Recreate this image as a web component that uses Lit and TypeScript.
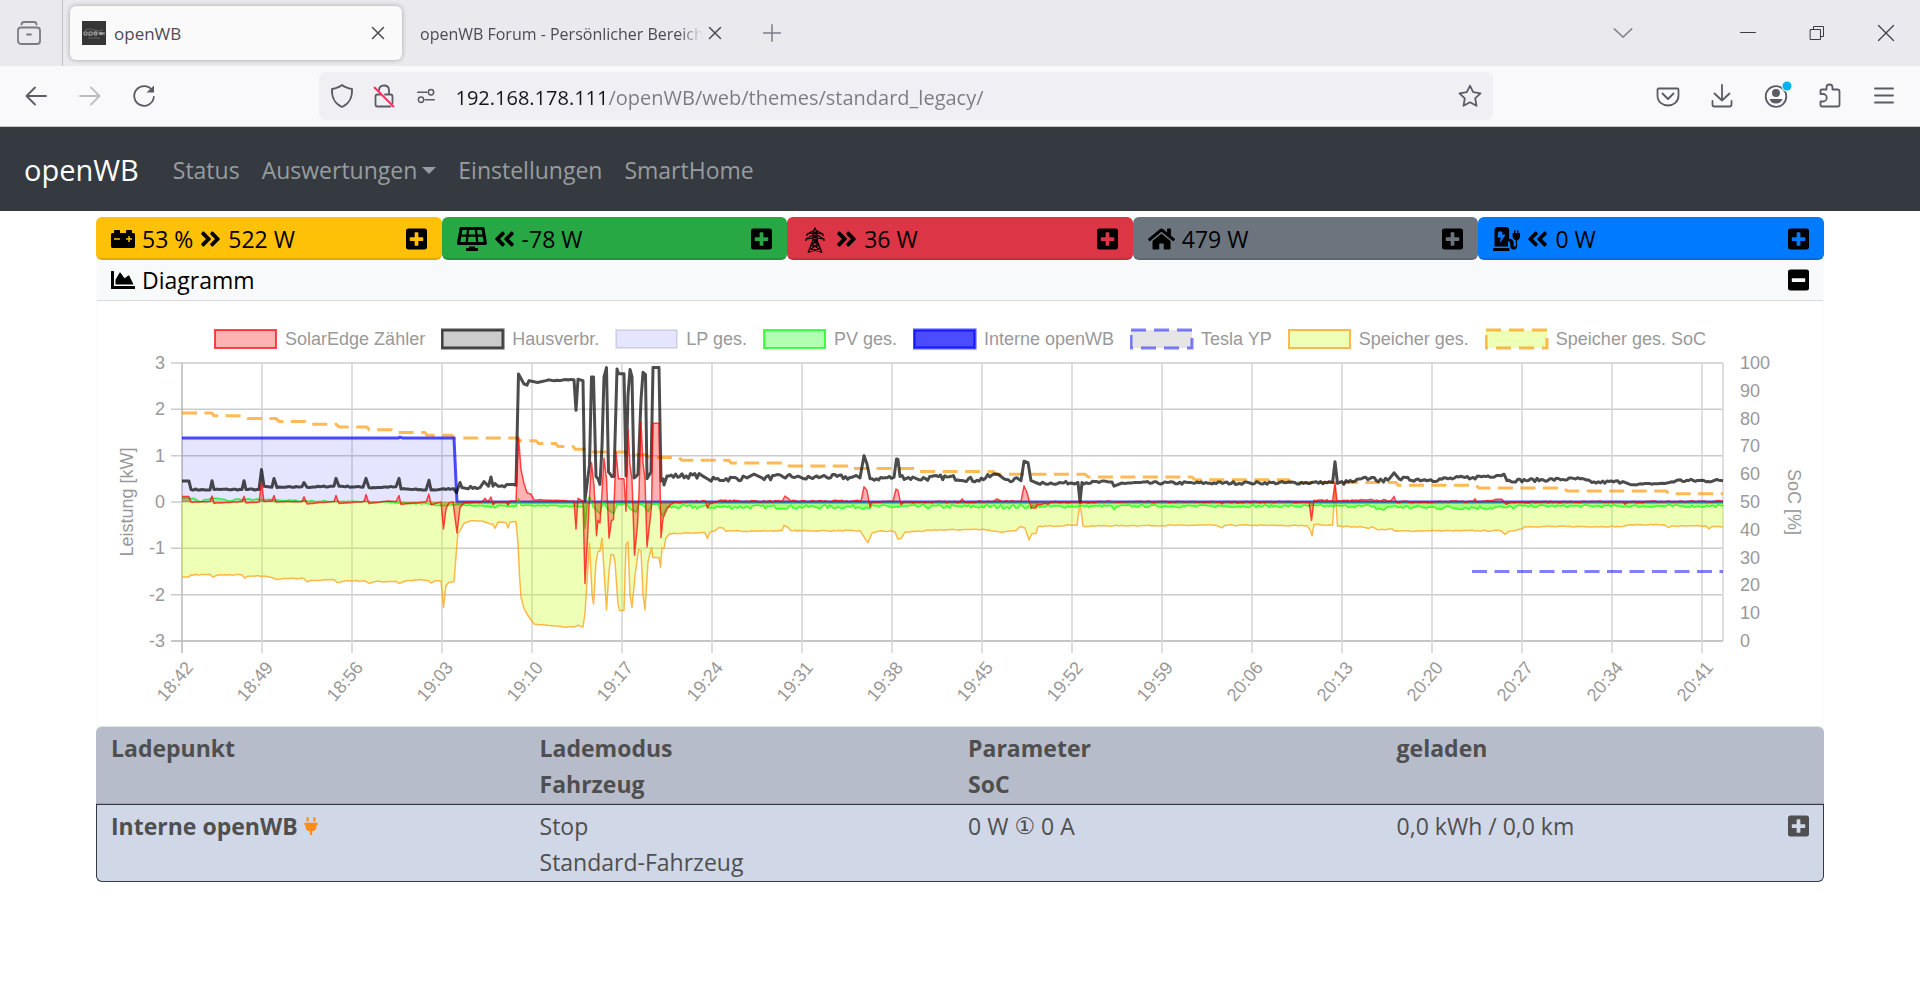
import { LitElement, html, svg, css, nothing } from "lit";
import { customElement, property, state } from "lit/decorators.js";

/* ---------- icon library ---------- */

const solid: Record<string, { w: number; d: string }> = {
  battery: { w: 512, d: "M480 128h-32V80c0-8.840-7.160-16-16-16h-96c-8.840 0-16 7.160-16 16v48H192V80c0-8.840-7.160-16-16-16H80c-8.840 0-16 7.160-16 16v48H32c-17.670 0-32 14.330-32 32v256c0 17.670 14.330 32 32 32h448c17.670 0 32-14.330 32-32V160c0-17.670-14.330-32-32-32zM192 264c0 4.420-3.580 8-8 8H72c-4.420 0-8-3.580-8-8v-16c0-4.420 3.580-8 8-8h112c4.420 0 8 3.580 8 8v16zm256 0c0 4.420-3.580 8-8 8h-40v40c0 4.420-3.580 8-8 8h-16c-4.420 0-8-3.580-8-8v-40h-40c-4.420 0-8-3.580-8-8v-16c0-4.420 3.580-8 8-8h40v-40c0-4.420 3.580-8 8-8h16c4.420 0 8 3.580 8 8v40h40c4.420 0 8 3.580 8 8v16z" },
  solar: { w: 640, d: "M431.980 448.010l-47.970.050V416h-128v32.210l-47.980.050c-8.820.010-15.970 7.160-15.980 15.990l-.050 31.730c-.010 8.850 7.170 16.030 16.020 16.020l223.960-.260c8.820-.010 15.970-7.160 15.980-15.980l.040-31.730c.010-8.850-7.170-16.030-16.020-16.020zM585.200 26.740C582.580 11.310 568.990 0 553.060 0H86.930C71 0 57.410 11.310 54.790 26.740-3.320 369.160.04 348.080.03 352c-.030 17.320 14.290 32 32.600 32h574.740c18.230 0 32.510-14.560 32.590-31.790.020-4.080 3.350 16.950-54.760-325.470zM259.830 64h120.330l9.770 96H250.060l9.770-96zm-75.170 256H71.090L90.100 208h105.970l-11.410 112zm16.290-160H98.240l16.290-96h96.190l-9.770 96zm32.820 160l11.400-112h149.650l11.400 112H233.770zm195.500-256h96.190l16.290 96H439.040l-9.770-96zm26.060 256l-11.400-112H549.900l19.010 112H455.340z" },
  home: { w: 576, d: "M280.370 148.260L96 300.110V464a16 16 0 0 0 16 16l112.060-.290a16 16 0 0 0 15.920-16V368a16 16 0 0 1 16-16h64a16 16 0 0 1 16 16v95.640a16 16 0 0 0 16 16.050L464 480a16 16 0 0 0 16-16V300L295.670 148.260a12.190 12.190 0 0 0-15.300 0zM571.600 251.470L488 182.560V44.050a12 12 0 0 0-12-12h-56a12 12 0 0 0-12 12v72.610L318.470 43a48 48 0 0 0-61 0L4.340 251.470a12 12 0 0 0-1.600 16.900l25.500 31A12 12 0 0 0 45.150 301l235.220-193.740a12.190 12.190 0 0 1 15.300 0L530.900 301a12 12 0 0 0 16.900-1.600l25.500-31a12 12 0 0 0-1.700-16.930z" },
  charger: { w: 576, d: "M336 448H16c-8.840 0-16 7.160-16 16v32c0 8.840 7.160 16 16 16h320c8.840 0 16-7.160 16-16v-32c0-8.840-7.160-16-16-16zm208-320V80c0-8.840-7.160-16-16-16s-16 7.160-16 16v48h-32V80c0-8.840-7.160-16-16-16s-16 7.160-16 16v48h-16c-8.840 0-16 7.160-16 16v35.760c0 51.190 28.240 93.200 72 107.700V392c0 13.230-10.770 24-24 24s-24-10.770-24-24V336c0-48.600-39.400-88-88-88h-8V64c0-35.350-28.650-64-64-64H96C60.650 0 32 28.650 32 64v352h288V304h8c22.090 0 40 17.910 40 40v61.450c0 37.700 28.270 72.140 65.790 75.800 43.160 4.220 79.660-29.770 79.660-72.050V285.190c41.800-15.500 70.550-56.400 70.550-105.430V144c0-8.840-7.160-16-16-16h-16zm-283.910 47.760l-93.700 139c-2.200 3.330-6.210 5.240-10.390 5.240-7.670 0-13.470-6.280-11.670-12.920L167.350 224H108c-7.250 0-12.850-5.590-11.890-11.890l16-107C112.900 99.900 117.980 96 124 96h68c7.880 0 13.620 6.540 11.600 13.260L192 160h60c9.190 0 15.090 8.740 8.090 15.760z" },
  right: { w: 448, d: "M224.300 273l-136 136c-9.400 9.400-24.600 9.400-33.900 0l-22.600-22.600c-9.400-9.400-9.400-24.600 0-33.900l96.400-96.400-96.400-96.400c-9.400-9.400-9.400-24.600 0-33.900L54.300 103c9.400-9.400 24.600-9.400 33.900 0l136 136c9.500 9.400 9.500 24.600.1 34zm192-34l-136-136c-9.400-9.400-24.600-9.400-33.900 0l-22.600 22.600c-9.400 9.400-9.400 24.600 0 33.900l96.400 96.400-96.400 96.400c-9.400 9.400-9.400 24.600 0 33.900l22.600 22.600c9.400 9.400 24.600 9.400 33.900 0l136-136c9.400-9.200 9.400-24.400 0-33.800z" },
  left: { w: 448, d: "M223.700 239l136-136c9.400-9.400 24.600-9.400 33.900 0l22.600 22.600c9.400 9.400 9.400 24.600 0 33.900L319.900 256l96.400 96.400c9.400 9.400 9.400 24.600 0 33.900L393.700 409c-9.400 9.400-24.600 9.400-33.900 0l-136-136c-9.500-9.400-9.500-24.600-.1-34zm-192 34l136 136c9.400 9.400 24.600 9.400 33.900 0l22.600-22.600c9.400-9.400 9.400-24.600 0-33.900L127.900 256l96.400-96.400c9.400-9.400 9.400-24.600 0-33.900L201.700 103c-9.400-9.400-24.600-9.400-33.900 0l-136 136c-9.500 9.400-9.500 24.600-.1 34z" },
  area: { w: 512, d: "M500 384c6.600 0 12 5.400 12 12v40c0 6.600-5.400 12-12 12H12c-6.600 0-12-5.400-12-12V76c0-6.600 5.400-12 12-12h40c6.600 0 12 5.400 12 12v308h436zM372.700 159.500L288 216l-85.300-113.700c-5.100-6.800-15.500-6.300-19.900 1L96 248v104h384l-89.900-187.800c-3.200-6.500-11.400-8.700-17.400-4.700z" },
  plus: { w: 448, d: "M400 32H48C21.500 32 0 53.500 0 80v352c0 26.500 21.500 48 48 48h352c26.500 0 48-21.500 48-48V80c0-26.500-21.500-48-48-48zm-32 252c0 6.600-5.400 12-12 12h-92v92c0 6.600-5.400 12-12 12h-56c-6.600 0-12-5.400-12-12v-92H92c-6.600 0-12-5.400-12-12v-56c0-6.600 5.400-12 12-12h92v-92c0-6.600 5.400-12 12-12h56c6.600 0 12 5.400 12 12v92h92c6.600 0 12 5.400 12 12v56z" },
  minus: { w: 448, d: "M400 32H48C21.500 32 0 53.500 0 80v352c0 26.500 21.500 48 48 48h352c26.500 0 48-21.500 48-48V80c0-26.500-21.500-48-48-48zM92 296c-6.600 0-12-5.400-12-12v-56c0-6.600 5.400-12 12-12h264c6.600 0 12 5.400 12 12v56c0 6.600-5.400 12-12 12H92z" },
  plug: { w: 384, d: "M320 32a32 32 0 0 0-64 0v96h64zm48 128H16a16 16 0 0 0-16 16v32a16 16 0 0 0 16 16h16v32a160.070 160.070 0 0 0 128 156.800V512h64v-99.200A160.070 160.070 0 0 0 352 256v-32h16a16 16 0 0 0 16-16v-32a16 16 0 0 0-16-16zM128 32a32 32 0 0 0-64 0v96h64z" },
};

const icon = (name: string, size = 24) => html`<svg class="fa" aria-hidden="true"
  width=${Math.round((solid[name].w / 512) * size)} height=${size}
  viewBox="0 0 ${solid[name].w} 512"><path d=${solid[name].d} fill="currentColor"></path></svg>`;

const pylon = html`<svg class="fa" aria-hidden="true" width="27" height="28" viewBox="0 -1 27 28" fill="none" stroke="currentColor" stroke-width="1.200">
  <path d="M11 6 L13 2 L15 6 V14 M11 6 V14 L6 27 M15 14 L20 27 M11 14 H15 M11 6 H15 M11 10 H15 M11 6 L15 10 M15 6 L11 10 M11 10 L15 14 M15 10 L11 14 M10 17 L16 17 M9 20 L17 20 M15 14 L10 18 L17 23 L7 26 M11 14 L16 18 L9 23 L19 26"/>
  <path d="M11 5 L5 8 V10 M15 5 L21 8 V10 M11 7 L6 8 M15 7 L20 8 M11 9 L4 13 V15 M15 9 L22 13 V15 M11 12 L5 13 M15 12 L21 13"/></svg>`;

/** Outline icons of the window chrome, drawn on a 24 px grid. */
const line = (body: unknown, cls = "") => html`<svg class="line ${cls}" width="24" height="24" viewBox="0 0 24 24" aria-hidden="true">${body}</svg>`;

const glyph = {
  tabs: svg`<path d="M4.500 3.500 Q4.500 1 7 1 H17 Q19.500 1 19.500 3.500"/><rect x="1" y="6.500" width="22" height="16.500" rx="3"/><path d="M10 13.500 H14"/>`,
  close: svg`<path d="M6.500 6.500 L17.500 17.500 M17.500 6.500 L6.500 17.500"/>`,
  add: svg`<path d="M12 2 V22 M2 12 H22"/>`,
  chevron: svg`<path d="M1.500 7 L12 17 L22.500 7"/>`,
  minimize: svg`<path d="M4.500 11.500 H19.500" stroke-width="1"/>`,
  restore: svg`<g stroke-width="1"><rect x="5.500" y="8.500" width="10" height="10"/><path d="M8.500 8.500 V5.500 H18.500 V15.500 H15.500"/></g>`,
  quit: svg`<path d="M4.500 4.500 L19.500 19.500 M19.500 4.500 L4.500 19.500" stroke-width="1.200"/>`,
  back: svg`<path d="M22 12 H2.500 M11 3.500 L2.500 12 L11 20.500"/>`,
  forward: svg`<path d="M2 12 H21.500 M13 3.500 L21.500 12 L13 20.500"/>`,
  reload: svg`<path d="M20.500 7 A9.800 9.800 0 1 0 21.800 13"/><path d="M22 1.500 V8.500 H14.500 Z" fill="currentColor" stroke="none"/>`,
  shield: svg`<path d="M12 1 C15 3.500 19 4.500 22 5 C22.500 13 19 20 12 23 C5 20 1.500 13 2 5 C5 4.500 9 3.500 12 1 Z"/>`,
  lock: svg`<path d="M7 6.500 Q7 1.500 12 1.500 Q17 1.500 17 6.500 V10.500 M8.500 10.500 H5.500 Q3.500 10.500 3.500 12.500 V20.500 Q3.500 22.500 5.500 22.500 H18.500 M20.500 19 V12.500 Q20.500 10.500 18.500 10.500 H13"/><path d="M2.500 3.500 L21.500 22.500" stroke="#ff2a5c"/>`,
  tune: svg`<path d="M2 7.500 H13 M11 16.500 H22"/><circle cx="18" cy="7.500" r="3.200"/><circle cx="6" cy="16.500" r="3.200"/>`,
  star: svg`<path d="M12 1.800 L15.200 8.200 L22.500 9.300 L17.200 14.300 L18.500 21.800 L12 18.300 L5.500 21.800 L6.800 14.300 L1.500 9.300 L8.800 8.200 Z"/>`,
  pocket: svg`<path d="M2.500 4.500 H21.500 Q22.500 4.500 22.500 6 V11.500 C22.500 18 17.500 21.500 12 21.500 C6.500 21.500 1.500 18 1.500 11.500 V6 Q1.500 4.500 2.500 4.500 Z M6.500 9.500 L12 15 L17.500 9.500"/>`,
  download: svg`<path d="M12 1 V16.500 M4.500 9.500 L12 16.500 L19.500 9.500 M2.500 17 V20.500 Q2.500 22.500 4.500 22.500 H19.500 Q21.500 22.500 21.500 20.500 V17"/>`,
  account: svg`<circle cx="12" cy="12.500" r="10.300"/><circle cx="12" cy="9" r="4" fill="currentColor" stroke="none"/><path d="M5.500 15 H18.500 Q17 19.500 12 19.500 Q7 19.500 5.500 15 Z" fill="currentColor" stroke="none"/><circle cx="23" cy="2" r="5.500" fill="#f9f9fb" stroke="none"/><circle cx="23" cy="2" r="4.500" fill="#00b3f4" stroke="none"/>`,
  extension: svg`<path d="M2.500 10 V6.500 Q2.500 5.500 4 5.500 H8.500 V3.500 A3 3 0 0 1 14.500 3.500 V5.500 H19.500 Q21.500 5.500 21.500 7.500 V21 Q21.500 22.500 20 22.500 H4 Q2.500 22.500 2.500 21 V17.500 H5 A3.700 3.700 0 0 0 5 10 Z"/>`,
  menu: svg`<path d="M3 4.500 H21 M3 11.500 H21 M3 18.500 H21"/>`,
};

/* ---------- chart data: plot position, kW ---------- */

type Point = [number, number];
const parse = (text: string): Point[] =>
  text.trim().split(/\s+/).map((pair) => pair.split(",").map(Number) as Point);

const GRID = parse(`0,.12 7,.12 9,0 28,.01 30,.13 32,-.03 60,.01 62,.12 64,-.02 77,0 79.5,.42 82,.01 90,.03 92,.14 94,0 120,.01 122,.11 125,-.04
152,.01 154,.14 157,-.03 182,.01 184,.16 187,-.03 206,.02 214,.01 217,.14 219,-.05 244,0 247,.17 249,-.06 259,0 261.5,-.58 264,-.15 267,-.02
271,0 275,-.67 278,-.12 282,-.02 300,0 303,.08 306,0 309,.11 311,-.06 314,0 324,0 326,-.07 328,.02 334,.02 336.5,1.4 339,.7 342,.4 345,.2
349,.17 352,.05 392,.02 394,-.59 396,.08 401,.02 403,-1.76 405.5,-.8 407.5,.1 409.5,.85 412,.35 414.5,-.73 416,-.4 418,-.45 420,.2 422,.95
424.5,.5 427,-.78 429.5,-.4 431.5,-.38 434,1.07 436.5,.5 442,.5 444,-.2 446,1.57 448,.8 450,.5 452.5,-1.15 455.5,-.5 457,.2 459,1.72 461,.85
463,.5 465,-.97 468,-.4 469.5,-.1 471,1.7 477,1.7 479,-.77 481,-.35 485,-.15 489,-.05 493,0 523.5,.02 525.5,-.13 528,-.03 537,.03 600,.01
603,.13 606,.08 609,.02 679,.02 682,.33 685,.25 688,-.11 690,0 711,.02 714,.28 716,.25 719,-.06 722,0 778,0 780,.07 782.5,0 812,.02 815,.07
820,.01 839,.02 842,.35 845,.2 847.5,0 849.5,-.13 854,-.13 855,-.05 866,-.05 869,0 1038,0 1040,-.04 1042,0 1127,0 1129.5,-.4 1132,.04
1150.6,.03 1153,.42 1155,.02 1184,.04 1209,.03 1212,.12 1214,0 1291,.01 1293,.07 1295,0 1314,.06 1320,.06 1324,-.05 1330,0 1441,0 1443,-.05
1446,0 1541,.02`);

const HOUSE = parse(`0,.45 7,.45 9,.27 28,.26 30,.46 32,.27 60,.27 62,.46 64,.27 77,.27 79.5,.7 82,.34 90,.32 92,.51 95,.31 120,.33 122,.42
125,.32 152,.34 154,.51 157,.34 181,.32 184,.51 187,.31 214,.33 217,.51 219,.28 244,.26 247,.47 249,.26 271.5,.29 274.5,.2 278,.42 280,.31
298,.31 302,.44 306.5,.34 309,.54 311,.34 313,.4 316,.34 334,.36 336.5,2.76 342,2.55 345,2.52 347,2.62 355.5,2.58 364,2.62 382,2.64
392,2.64 394,1.98 396,2.65 401,2.62 403,.04 407.5,.8 409.5,2.7 411.5,2.7 414,.55 416,.5 418,.38 420,1.2 422,2.7 424.5,2.9 426.5,.65 430,.55
432,.55 435,2.87 436.5,2.77 442,2.77 444,.56 446,2.3 448,2.86 450,2.7 452,.52 454,.55 456,.6 459,2.2 461,2.8 463.5,2.75 465,.5 469,.65
471,2.9 477,2.9 479,.45 481,.5 482,.37 485,.56 520,.57 527,.48 565,.52 572,.6 580,.52 616,.56 622,.5 640,.55 678,.52 682,1 685,.82 688,.5
712,.53 714.5,.93 716,.92 718,.55 735,.5 765,.54 795,.47 816,.6 822,.5 839,.46 842,.88 846,.85 849,.46 856,.4 896,.42 898,0 900,.42
930,.43 932,.34 940,.41 1068,.41 1150.6,.42 1153,.87 1155.5,.4 1173,.45 1190,.53 1201.5,.43 1212,.63 1217,.5 1249,.48 1291,.53 1322,.6
1325,.46 1398,.5 1410,.42 1441,.44 1448,.38 1483,.4 1494,.46 1541,.46`);

const STORAGE = parse(`0,-1.62 7,-1.62 9,-1.57 28,-1.56 31,-1.62 35,-1.58 60,-1.57 62.5,-1.64 66,-1.6 82,-1.6 90,-1.63 94,-1.67 97,-1.66
122,-1.65 125,-1.72 129,-1.69 152,-1.68 155,-1.73 165,-1.7 183,-1.7 187,-1.76 192,-1.72 214,-1.71 217,-1.76 224,-1.7 240,-1.68 247,-1.7
249,-1.75 253,-1.7 259,-1.7 261.5,-2.28 264,-1.8 267,-1.73 272,-1.72 275,-.9 276,-.67 278,-.62 282,-.46 288,-.41 300,-.41 308,-.47 311,-.48
313,-.57 316,-.43 324,-.44 326,-.56 328,-.43 334,-.42 336,-.9 337.5,-1.6 339,-2.05 342,-2.3 346,-2.45 352,-2.63 357,-2.65 378,-2.68 382,-2.7
392,-2.7 396,-2.66 401,-2.7 403,-2.4 407.5,-.89 410,-2 411.5,-2.2 414,-1.3 416,-1.07 418,-1.06 420,-.78 424.5,-2.33 427,-1.5 429,-1.13
431.5,-1.14 433,-1.3 436,-2.2 437.5,-2.34 442,-2.34 444,-.92 446,-.86 448,-2 450,-2.28 453,-1.6 456.5,-1.03 459,-1.05 461,-2 463,-2.33
466,-1.3 469.5,-.98 471,-1.2 477,-1.2 478.5,-1.41 480,-1 482,-1 484,-.77 488,-.68 520,-.66 523,-.66 525.5,-.79 528,-.65 533,-.62 537,-.55
541,-.56 544,-.63 600,-.62 602,-.5 606,-.55 609,-.62 678,-.62 682,-.75 686,-.88 690,-.67 696,-.63 711,-.63 713,-.65 716,-.8 719,-.79
723,-.65 760,-.6 801,-.59 819,-.65 834,-.62 838,-.53 843,-.56 847,-.82 850,-.68 854,-.68 856,-.53 890,-.5 895,-.5 898,0 901,-.52 950,-.51
1034,-.5 1040,-.56 1043,-.5 1125,-.51 1128,-.6 1130,-.73 1132,-.48 1150.6,-.5 1153,.35 1155.5,-.52 1180,-.54 1187,-.57 1190,-.53 1196,-.6
1210,-.58 1213,-.63 1250,-.62 1319,-.62 1323,-.7 1327,-.63 1340,-.58 1343,-.53 1440,-.53 1450,-.49 1482,-.49 1486,-.55 1490,-.52 1524,-.52
1527,-.58 1530,-.53 1541,-.53`);

const PV = parse(`0,.1 13,.07 18,0 20,.01 22,.05 34,.08 50,.02 53,.06 82,.05 132,.02 204,0 239,-.04 259,-.07 275,-.06 311,-.1 313,-.13 316,-.08
334,-.09 336.5,.07 339,-.07 402,-.1 403,-.57 405.5,0 407.5,.13 411,-.1 418,-.25 421,0 426.5,-.18 432,-.25 435,-.05 440,-.06 444,-.02 448,-.15
454,-.22 457,-.04 462,-.08 466,-.22 470,-.05 476,-.04 480,-.3 483,-.2 485,-.11 860,-.1 930,-.09 932,-.17 935,-.09 1180,-.09 1190,-.11
1202,-.17 1206,-.1 1240,-.12 1325,-.12 1345,-.09 1541,-.09`);

const CHARGE = parse("0,1.38 216,1.38 218,1.4 221,1.38 272,1.38 275,0 1541,0");

const SOC = parse(`0,82 30,82 32,81 63,81 66,80 94,80 97,79 123,79 126,78 154,78 157,77 185,77 187,76 210,76 213,75 243,75 245,74 270,74 272,73
335,73 337,72 354,72 357,71 374,71 376,70 391,70 393,69 408,69 411,68 444,68 446,67 464,67 467,66 497,66 500,65 547,65 549,64 605,64 607,63
670,63 672,62 735,62 737,61 811,61 814,60 903,60 906,59 1010,59 1013,58 1107,58 1109,57 1214,57 1216,56 1294,56 1297,55 1382,55 1385,54
1484,54 1487,53 1541,53`);

const PLOT_W = 1541;
const PLOT_H = 278;
const SAMPLE = 2.14;
const yPower = (kw: number) => ((3 - kw) / 6) * PLOT_H;
const ySoc = (pct: number) => PLOT_H - (pct / 100) * PLOT_H;

function ripple(points: Point[], amplitude: (x: number) => number): Point[] {
  const out: Point[] = [];
  let seed = 7;
  const random = () => {
    seed = (seed * 16807) % 2147483647;
    return (seed / 2147483647) * 2 - 1;
  };
  points.forEach(([x, v], i) => {
    out.push([x, v]);
    const next = points[i + 1];
    if (!next) return;
    const span = next[0] - x;
    if (span < 9) return;
    for (let dx = SAMPLE; dx < span - SAMPLE; dx += SAMPLE) {
      out.push([x + dx, v + ((next[1] - v) * dx) / span + random() * amplitude(x + dx)]);
    }
  });
  return out;
}

const toPath = (points: Point[], scale: (v: number) => number) =>
  "M" + points.map(([x, v]) => `${x.toFixed(1)} ${scale(v).toFixed(1)}`).join("L");
const toArea = (points: Point[]) =>
  `${toPath(points, yPower)}L${points[points.length - 1][0]} ${yPower(0)}L${points[0][0]} ${yPower(0)}Z`;

const gridSeries = ripple(GRID, (x) => (x > 485 ? 0.02 : 0.006));
const houseSeries = ripple(HOUSE, (x) => (x < 275 ? 0.014 : x < 336 ? 0.03 : x < 402 ? 0.012 : x < 850 ? 0.055 : x < 1155 ? 0.03 : x < 1325 ? 0.045 : x > 1441 && x < 1490 ? 0.015 : 0.035));
const storageSeries = ripple(STORAGE, () => 0.012);
const pvSeries = ripple(PV, (x) => (x < 275 ? 0.015 : x < 402 ? 0.012 : x < 850 ? 0.045 : x > 1180 && x < 1340 ? 0.05 : 0.028));

const LEGEND = [
  { label: "SolarEdge Zähler", fill: "rgba(255,0,0,.3)", stroke: "rgba(255,0,0,.7)", width: 2 },
  { label: "Hausverbr.", fill: "rgba(0,0,0,.2)", stroke: "rgba(0,0,0,.7)", width: 3 },
  { label: "LP ges.", fill: "rgba(0,0,255,.1)", stroke: "rgba(0,0,55,.1)", width: 2 },
  { label: "PV ges.", fill: "rgba(0,255,0,.3)", stroke: "rgba(0,255,0,.7)", width: 2 },
  { label: "Interne openWB", fill: "rgba(0,0,255,.7)", stroke: "rgba(0,0,255,.7)", width: 3 },
  { label: "Tesla YP", fill: "rgba(0,0,0,.1)", stroke: "rgba(0,0,255,.5)", width: 3, dash: "15 8" },
  { label: "Speicher ges.", fill: "rgba(200,255,13,.3)", stroke: "rgba(255,155,13,.7)", width: 2 },
  { label: "Speicher ges. SoC", fill: "rgba(200,255,13,.3)", stroke: "rgba(255,155,13,.7)", width: 3, dash: "15 8" },
];

const TIMES = ["18:42", "18:49", "18:56", "19:03", "19:10", "19:17", "19:24", "19:31", "19:38", "19:45", "19:52", "19:59", "20:06", "20:13", "20:20", "20:27", "20:34", "20:41"];
const timeX = (i: number) => (i === 0 ? 0 : -10 + 90 * i);

@customElement("power-chart")
export class PowerChart extends LitElement {
  static styles = css`
    :host { display: block; font: 18px/24px "Liberation Sans", Arial, sans-serif; color: #999; }
    .legend { display: flex; flex-wrap: wrap; justify-content: center; gap: 0 16px; margin: 0; padding: 26px 0 3px; list-style: none; }
    .item { display: flex; align-items: center; gap: 7px; }
    .plot { display: block; width: 100%; height: auto; }
    .plot text { fill: #999; }
    .end { text-anchor: end; }
    .mid { text-anchor: middle; }
  `;

  render() {
    return html`
      <ul class="legend">
        ${LEGEND.map((l) => html`<li class="item">
          <svg width="64" height="24" viewBox="0 0 64 24" aria-hidden="true">
            <rect x="1" y="3" width="61" height="18" fill=${l.fill} stroke=${l.stroke} stroke-width=${l.width} stroke-dasharray=${l.dash ?? "none"}></rect>
          </svg>${l.label}</li>`)}
      </ul>
      <svg class="plot" viewBox="-85 -9 1726 371" role="img" aria-label="Diagramm">
        ${[3, 2, 1, 0, -1, -2, -3].map((v) => svg`
          <path d="M-11 ${yPower(v)}H${PLOT_W}" stroke=${v === -3 ? "#b3b3b3" : "#ccc"} stroke-width="1.500"></path>
          <text class="end" x="-17" y=${yPower(v) + 6}>${v}</text>`)}
        ${TIMES.map((t, i) => svg`
          <path d="M${timeX(i)} 0V${PLOT_H + 12}" stroke=${i === 0 ? "#b8b8b8" : "#d4d4d4"} stroke-width="1.500"></path>
          <text class="end" transform="translate(${timeX(i) + 12} ${PLOT_H + 27}) rotate(-50)">${t}</text>`)}
        <path d="M${PLOT_W} 0V${PLOT_H}" stroke="#d4d4d4" stroke-width="1.500"></path>
        ${[100, 90, 80, 70, 60, 50, 40, 30, 20, 10, 0].map((v) => svg`<text x="1558" y=${ySoc(v) + 6}>${v}</text>`)}
        <text class="mid" transform="translate(-49 139) rotate(-90)">Leistung [kW]</text>
        <text class="mid" transform="translate(1606 139) rotate(90)">SoC [%]</text>

        <g fill="none" stroke-linejoin="round">
          <path d=${toPath(SOC, ySoc)} stroke="rgba(255,155,13,.7)" stroke-width="3" stroke-dasharray="15 7.500"></path>
          <path d=${toArea(storageSeries)} fill="rgba(200,255,13,.3)"></path>
          <path d=${toPath(storageSeries, yPower)} stroke="rgba(255,155,13,.7)" stroke-width="1.500"></path>
          <path d="M1290 ${ySoc(25)}H${PLOT_W}" stroke="rgba(0,0,255,.5)" stroke-width="3" stroke-dasharray="15 7.500"></path>
          <path d=${toPath(CHARGE, yPower)} stroke="rgba(0,0,255,.7)" stroke-width="3"></path>
          <path d=${toArea(pvSeries)} fill="rgba(0,255,0,.3)"></path>
          <path d=${toPath(pvSeries, yPower)} stroke="rgba(0,255,0,.7)" stroke-width="1.500"></path>
          <path d=${toArea(CHARGE)} fill="rgba(0,0,255,.1)"></path>
          <path d=${toPath(houseSeries, yPower)} stroke="rgba(0,0,0,.7)" stroke-width="3"></path>
          <path d=${toArea(gridSeries)} fill="rgba(255,0,0,.3)"></path>
          <path d=${toPath(gridSeries, yPower)} stroke="rgba(255,0,0,.7)" stroke-width="1.500"></path>
        </g>
      </svg>`;
  }
}

@customElement("browser-chrome")
export class BrowserChrome extends LitElement {
  @state() private address = "192.168.178.111/openWB/web/themes/standard_legacy/";

  static styles = css`
    :host { display: block; font: 17px/24px "Open Sans", "Noto Sans", sans-serif; color: #5b5b66; }
    * { box-sizing: border-box; }
    button { display: grid; place-items: center; padding: 0; border: 0; background: none; color: inherit; font: inherit; }
    .line { display: block; overflow: visible; fill: none; stroke: currentColor; stroke-width: 1.800; stroke-linecap: round; stroke-linejoin: round; }
    .tabbar { display: flex; align-items: center; height: 66px; background: #eae9ee; }
    .view { width: 63px; height: 66px; padding-right: 4px; border-right: 1px solid #bfbfc6; color: #7b7b84; flex: none; }
    .tab { display: flex; align-items: center; height: 54px; width: 332px; border-radius: 6px; color: #4c4b55; flex: none; }
    .active { margin-left: 7px; padding: 0 12px; background: #fafafb; box-shadow: 0 0 5px rgba(0, 0, 0, .3); }
    .favicon { width: 24px; height: 24px; margin-right: 8px; flex: none; }
    .title { flex: 1; overflow: hidden; white-space: nowrap; padding-top: 2px; }
    .faded { font-size: 16px; -webkit-mask-image: linear-gradient(to left, transparent, #000 24px); mask-image: linear-gradient(to left, transparent, #000 24px); }
    .second { padding-left: 18px; width: 325px; }
    .thin .line { stroke-width: 1.500; }
    .new { width: 54px; margin-left: 18px; color: #7b7b84; }
    .gap { flex: 1; }
    .all { width: 54px; margin-right: 63px; color: #85858c; }
    .win { width: 69px; color: #3b3b42; height: 66px; }
    .toolbar { display: flex; align-items: center; height: 61px; padding: 0 9px; background: #f9f9fb; border-bottom: 1px solid #c4c8cb; }
    .tool { width: 54px; height: 54px; flex: none; }
    .off { color: #bdbdc1; }
    .spring { flex: 8 1 0; }
    .url { display: flex; align-items: center; flex: 63 1 0; min-width: 0; height: 48px; padding: 0 2px; border-radius: 6px; background: #f0f0f4; }
    .small { width: 42px; height: 42px; flex: none; }
    .address { flex: 1; min-width: 0; height: 40px; margin: 0; padding: 2px 0 0 8px; border: 0; outline: 0; font: inherit; font-size: 20px;
      color: transparent; background: linear-gradient(to right, #15141a 159px, #7b7a83 159px); -webkit-background-clip: text; background-clip: text; }
    .s20 .line { width: 20px; height: 20px; }
  `;

  private tool(name: keyof typeof glyph, label: string, cls = "tool") {
    return html`<button class=${cls} aria-label=${label}>${line(glyph[name])}</button>`;
  }

  render() {
    return html`
      <div class="tabbar">
        ${this.tool("tabs", "Firefox View", "view")}
        <div class="tab active">
          <svg class="favicon" viewBox="0 0 24 24" aria-hidden="true"><rect width="24" height="24" fill="#363636"/><path d="M2 11h3v3h-3zM7 11v4M7 11h3v3h-3M12 12h3M12 14h3v-3h-3v3M17 11l1 3 1-3 1 3 1-3M22 11v3" fill="none" stroke="#aaa" stroke-width="1"/><path d="M3 9Q8 7 12 9T21 9M6 17h12" stroke="#777" fill="none" stroke-width=".7"/></svg>
          <span class="title">openWB</span>
          ${this.tool("close", "Tab schließen", "thin")}
        </div>
        <div class="tab second">
          <span class="title faded">openWB Forum - Persönlicher Bereich</span>
          ${this.tool("close", "Tab schließen", "thin")}
        </div>
        ${this.tool("add", "Neuer Tab", "new s20")}
        <span class="gap"></span>
        ${this.tool("chevron", "Alle Tabs", "all s20")}
        ${this.tool("minimize", "Minimieren", "win")}
        ${this.tool("restore", "Verkleinern", "win")}
        ${this.tool("quit", "Schließen", "win")}
      </div>
      <div class="toolbar">
        ${this.tool("back", "Zurück")}
        ${this.tool("forward", "Vor", "tool off")}
        ${this.tool("reload", "Neu laden")}
        <span class="spring"></span>
        <div class="url">
          ${this.tool("shield", "Schutz", "small")}
          ${this.tool("lock", "Verbindung nicht sicher", "small")}
          ${this.tool("tune", "Berechtigungen", "small s20")}
          <input class="address" aria-label="Adresse" .value=${this.address} />
          ${this.tool("star", "Lesezeichen", "small")}
        </div>
        <span class="spring"></span>
        ${this.tool("pocket", "Pocket")}
        ${this.tool("download", "Downloads")}
        ${this.tool("account", "Konto")}
        ${this.tool("extension", "Erweiterungen")}
        ${this.tool("menu", "Menü")}
      </div>`;
  }
}

@customElement("status-card")
export class StatusCard extends LitElement {
  @property() icon = "";
  @property() arrow = "";
  @property() before = "";
  @property() value = "";

  static styles = css`
    :host { display: flex; align-items: center; gap: 7px; height: 43px; box-sizing: border-box; padding: 2px 15px 0; border-radius: 6px; border-bottom: 2px solid rgba(0, 0, 0, .12); color: #000; }
    .fa { display: block; flex: none; }
    .more { display: block; margin-left: auto; padding: 0; border: 0; background: none; color: inherit; }
  `;

  render() {
    return html`
      ${this.icon === "pylon" ? pylon : icon(this.icon)}
      ${this.before ? html`<span>${this.before}</span>` : nothing}
      ${this.arrow ? icon(this.arrow) : nothing}
      <span>${this.value}</span>
      <button class="more" aria-label="Details">${icon("plus")}</button>`;
  }
}

@customElement("app-root")
export class AppRoot extends LitElement {
  static styles = css`
    :host { display: block; min-height: 100vh; background: #fff; font: 23px/36px "Open Sans", "Noto Sans", sans-serif; color: #000; }
    * { box-sizing: border-box; }
    .fa { display: block; flex: none; }
    .navbar { display: flex; align-items: center; height: 84px; padding: 2px 12px 0 24px; background: #343a40; }
    .brand { margin-right: 23px; color: #fff; font-size: 29px; text-decoration: none; }
    .link { display: flex; align-items: center; gap: 5px; padding: 0 11px; color: #999c9f; text-decoration: none; }
    .caret { border: 7px solid transparent; border-top-color: currentColor; border-bottom: 0; }
    .page { margin: 0 96px; padding-top: 6px; }
    .cards { display: grid; grid-template-columns: repeat(5, 1fr); }
    .yellow { background: #ffc107; }
    .green { background: #28a745; }
    .red { background: #dc3545; }
    .gray { background: #6c757d; }
    .blue { background: #007bff; }
    .panel { border: 1px solid #fbfbfb; border-top: 0; }
    .head { display: flex; align-items: center; gap: 7px; height: 41px; padding: 0 14px; background: #f8f9fb; border-bottom: 1px solid #d9dadb; }
    .heading { margin: 0; font: inherit; }
    .toggle { display: block; margin-left: auto; padding: 0; border: 0; background: none; color: inherit; }
    .points { width: 100%; border-collapse: separate; border-spacing: 0; table-layout: fixed; color: #4f4f4f; text-align: left; }
    .points th, .points td { padding: 3px 15px 1px; vertical-align: top; font-weight: 400; }
    .points .title { font-weight: 700; background: #b7bccb; border-top: 1px solid #e4e6ea; border-bottom: 1px solid #9fa3b6; }
    .points .title:first-child { border-top-left-radius: 6px; }
    .points .title:last-child { border-top-right-radius: 6px; }
    .col { width: 24.8%; }
    .points .cell { background: #d0d7e7; border: 1px solid #343a40; border-width: 1px 0; }
    .points .cell:first-child { border-left-width: 1px; padding-left: 14px; border-bottom-left-radius: 6px; font-weight: 700; }
    .points .cell:last-child { border-right-width: 1px; padding-right: 14px; border-bottom-right-radius: 6px; }
    .row { display: flex; align-items: center; gap: 6px; }
    .plug { color: #ff8c1a; }
    .phase { font-family: "DejaVu Sans", sans-serif; font-size: 23px; }
  `;

  render() {
    return html`
      <browser-chrome></browser-chrome>
      <nav class="navbar">
        <a class="brand" href="#">openWB</a>
        <a class="link" href="#status">Status</a>
        <a class="link" href="#auswertungen">Auswertungen<span class="caret"></span></a>
        <a class="link" href="#einstellungen">Einstellungen</a>
        <a class="link" href="#smarthome">SmartHome</a>
      </nav>
      <main class="page">
        <div class="cards">
          <status-card class="yellow" icon="battery" before="53 %" arrow="right" value="522 W"></status-card>
          <status-card class="green" icon="solar" arrow="left" value="-78 W"></status-card>
          <status-card class="red" icon="pylon" arrow="right" value="36 W"></status-card>
          <status-card class="gray" icon="home" value="479 W"></status-card>
          <status-card class="blue" icon="charger" arrow="left" value="0 W"></status-card>
        </div>
        <section class="panel">
          <div class="head">
            ${icon("area")}<h2 class="heading">Diagramm</h2>
            <button class="toggle" aria-label="Diagramm einklappen">${icon("minus")}</button>
          </div>
          <power-chart></power-chart>
        </section>
        <table class="points">
          <colgroup><col class="col" /><col class="col" /><col class="col" /><col /></colgroup>
          <thead>
            <tr>
              <th class="title" scope="col">Ladepunkt</th>
              <th class="title" scope="col">Lademodus<br />Fahrzeug</th>
              <th class="title" scope="col">Parameter<br />SoC</th>
              <th class="title" scope="col">geladen</th>
            </tr>
          </thead>
          <tbody>
            <tr>
              <th class="cell" scope="row"><span class="row">Interne openWB<span class="plug">${icon("plug", 18)}</span></span></th>
              <td class="cell">Stop<br />Standard-Fahrzeug</td>
              <td class="cell"><span class="row"><span>0 W</span><span class="phase">①</span><span>0 A</span></span></td>
              <td class="cell"><span class="row">0,0 kWh / 0,0 km<button class="toggle" aria-label="Details">${icon("plus")}</button></span></td>
            </tr>
          </tbody>
        </table>
      </main>`;
  }
}
